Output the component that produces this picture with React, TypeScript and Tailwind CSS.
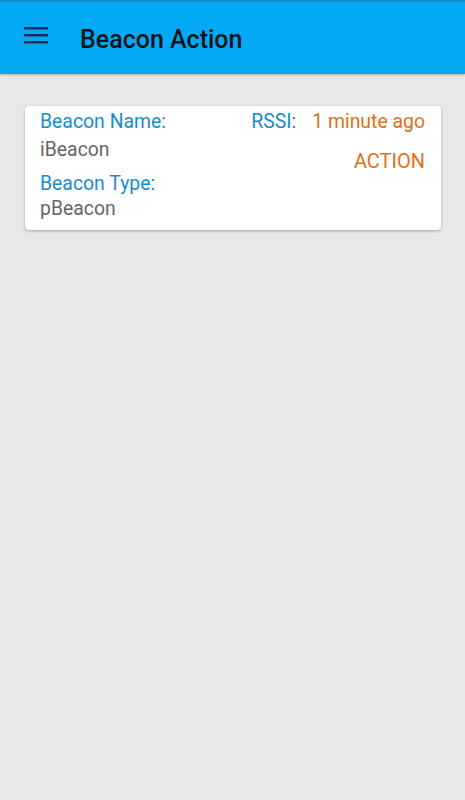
export default function App() {
	return (
		<div className="min-h-[800px] bg-[#e8e8e8] font-['Roboto',_'Liberation_Sans',_sans-serif]">
			<header className="flex h-[74px] items-start border-t-2 border-[#0a8fd0] bg-[#03a9f4] shadow-[0_1px_2px_rgba(0,0,0,0.25)]">
				<button className="ml-6 mt-[25px] text-[#123349]">
					<svg width="24" height="18" viewBox="0 0 24 18" fill="currentColor">
						<rect x="0" y="0" width="24" height="2.5" />
						<rect x="0" y="7" width="24" height="2.5" />
						<rect x="0" y="14" width="24" height="2.5" />
					</svg>
				</button>
				<h1 className="ml-8 mt-[23px] text-[25px] font-medium leading-[29px] text-[#101418]">Beacon Action</h1>
			</header>

			<main className="pl-[25px] pr-6 pt-8">
				<BeaconCard name="iBeacon" type="pBeacon" seen="1 minute ago" />
			</main>
		</div>
	);
}

type BeaconCardProps = {
	name: string;
	type: string;
	seen: string;
};

function BeaconCard({ name, type, seen }: BeaconCardProps) {
	return (
		<div className="flex justify-between rounded bg-white pb-[9px] pl-[15px] pr-4 pt-1 shadow-[0_1px_3px_rgba(0,0,0,0.3)]">
			<div className="text-[19.4px] leading-6">
				<p className="text-[#1a8bcc]">Beacon Name:</p>
				<p className="mt-1 text-[#666666]">{name}</p>
				<p className="mt-[10px] text-[#1a8bcc]">Beacon Type:</p>
				<p className="mt-px text-[#666666]">{type}</p>
			</div>
			<div className="flex flex-col items-end">
				<p className="text-[19.4px] leading-6">
					<span className="text-[#1a8bcc]">RSSI:</span>
					<span className="ml-4 text-[#e0711a]">{seen}</span>
				</p>
				<button className="mt-[15px] text-[20px] leading-6 text-[#e0711a]">ACTION</button>
			</div>
		</div>
	);
}
